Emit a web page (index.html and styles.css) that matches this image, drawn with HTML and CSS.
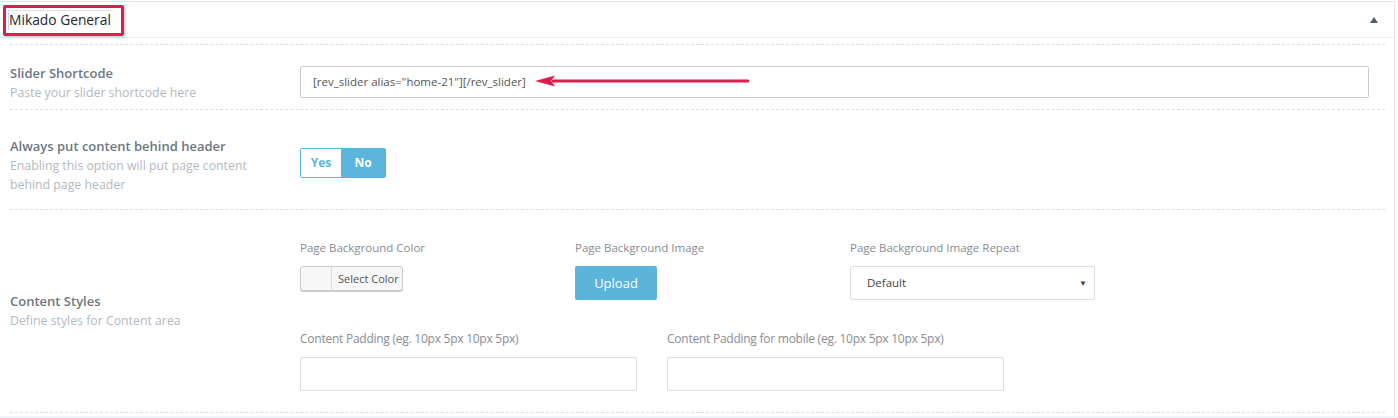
FILE: index.html
```html
<!DOCTYPE html>
<html lang="en">
<head>
    <meta charset="UTF-8">
    <meta name="viewport" content="width=device-width, initial-scale=1.0">
    <title>Mikado General</title>
    <link rel="stylesheet" href="styles.css">
</head>
<body>
    <!-- Meta box panel -->
    <div class="postbox">
        <div class="hndle">
            <div class="title-box"><span class="title">Mikado General</span></div>
            <span class="toggle-arrow"></span>
        </div>

        <div class="inside">
            <!-- Slider shortcode -->
            <div class="row row-slider">
                <div class="row-label">
                    <div class="label-title">Slider Shortcode</div>
                    <div class="label-desc">Paste your slider shortcode here</div>
                </div>
                <div class="row-field">
                    <div class="text-input wide">[rev_slider alias="home-21"][/rev_slider]</div>
                    <svg class="note-arrow" width="220" height="14" viewBox="0 0 220 14">
                        <path d="M18 7 H213" stroke="#dc1d4d" stroke-width="3" stroke-linecap="round"/>
                        <path d="M0 7 L20 1.5 L16 7 L20 12.5 Z" fill="#dc1d4d"/>
                    </svg>
                </div>
            </div>

            <!-- Content behind header -->
            <div class="row row-behind">
                <div class="row-label">
                    <div class="label-title">Always put content behind header</div>
                    <div class="label-desc">Enabling this option will put page content<br>behind page header</div>
                </div>
                <div class="row-field">
                    <div class="switch">
                        <span class="switch-yes">Yes</span>
                        <span class="switch-no">No</span>
                    </div>
                </div>
            </div>

            <!-- Content styles -->
            <div class="row row-styles">
                <div class="row-label">
                    <div class="label-title">Content Styles</div>
                    <div class="label-desc">Define styles for Content area</div>
                </div>
                <div class="row-field">
                    <div class="field-line">
                        <div class="field col-3">
                            <div class="field-label">Page Background Color</div>
                            <div class="color-btn">
                                <span class="swatch"></span>
                                <span class="color-text">Select Color</span>
                            </div>
                        </div>
                        <div class="field col-3">
                            <div class="field-label">Page Background Image</div>
                            <div class="upload-btn">Upload</div>
                        </div>
                        <div class="field">
                            <div class="field-label">Page Background Image Repeat</div>
                            <div class="select-box">
                                <span>Default</span>
                                <span class="select-arrow">&#9660;</span>
                            </div>
                        </div>
                    </div>
                    <div class="field-line second">
                        <div class="field col-pad">
                            <div class="field-label narrow">Content Padding (eg. 10px 5px 10px 5px)</div>
                            <div class="text-input pad"></div>
                        </div>
                        <div class="field">
                            <div class="field-label narrow">Content Padding for mobile (eg. 10px 5px 10px 5px)</div>
                            <div class="text-input pad"></div>
                        </div>
                    </div>
                </div>
            </div>
        </div>
    </div>
    <div class="bottom-band"></div>
</body>
</html>
```

FILE: styles.css
```css
/* Page base */
body {
    margin: 0;
    background: #fff;
    font-family: "Open Sans", "Noto Sans", Arial, sans-serif;
    color: #444;
}

/* Meta box */
.postbox {
    margin-top: 1px;
    margin-right: 3px;
    border-top: 1px solid #e5e5e5;
    border-right: 1px solid #e5e5e5;
    padding-bottom: 3px;
}

.hndle {
    height: 35px;
    border-bottom: 1px solid #eee;
    display: flex;
    align-items: flex-start;
    justify-content: space-between;
    padding: 0 16px 0 3px;
}

/* red highlight round the title */
.title-box {
    margin-top: 3px;
    height: 25px;
    width: 113px;
    border: 3px solid #dc1d4d;
    border-radius: 2px;
    box-shadow: 1px 1px 3px rgba(0, 0, 0, 0.25);
    padding: 0 0 0 2px;
}

.title {
    display: block;
    margin-top: 2px;
    height: 19px;
    border-left: 1px solid #d4d4d4;
    border-top: 1px solid #e2e2e2;
    width: 104px;
    font-size: 13.8px;
    line-height: 18px;
    color: #23282d;
    white-space: nowrap;
}

/* collapse arrow */
.toggle-arrow {
    margin-top: 15px;
    width: 0;
    height: 0;
    border-left: 4px solid transparent;
    border-right: 4px solid transparent;
    border-bottom: 6px solid #555d66;
}

.inside {
    padding: 0 9px 0 10px;
}

/* one option row */
.row {
    display: flex;
    border-top: 1px dashed #ddd;
    margin-top: 6px;
}
.row + .row {
    margin-top: 0;
}

.row-label {
    width: 290px;
    flex-shrink: 0;
}

.label-title {
    font-size: 13px;
    font-weight: 600;
    line-height: 20px;
    color: #6d7784;
}

.label-desc {
    font-size: 12.3px;
    line-height: 19.5px;
    color: #b3b9c2;
}

.row-field {
    flex: 1;
    padding-right: 16px;
    position: relative;
}

.row-slider {
    padding: 18px 0 6px;
}
.row-slider .row-field {
    padding-top: 3px;
}

.row-behind {
    padding: 26px 0 14px;
}

.row-styles {
    padding: 29px 0 21px;
    align-items: center;
    border-bottom: 1px dashed #ddd;
}
.row-styles .row-label {
    padding-bottom: 7px;
}

/* inputs */
.text-input {
    height: 32px;
    border: 1px solid #ccc;
    border-radius: 2px;
    box-sizing: border-box;
    font-size: 11.5px;
    line-height: 30px;
    color: #555;
    padding-left: 12px;
}

.text-input.pad {
    width: 337px;
    height: 34px;
    border-color: #ddd;
}

/* annotation arrow lying over the input */
.note-arrow {
    position: absolute;
    left: 235px;
    top: 11px;
}

/* yes/no switch */
.switch {
    display: flex;
    width: 86px;
    height: 30px;
    margin-top: 12px;
    border: 1px solid #5bb5dc;
    border-radius: 2px;
    box-sizing: border-box;
    font-size: 12px;
    font-weight: 700;
}
.switch span {
    display: flex;
    align-items: center;
    justify-content: center;
}
.switch-yes {
    width: 40px;
    color: #5bb5dc;
    background: #fff;
}
.switch-no {
    flex: 1;
    color: #fff;
    background: #5bb5dc;
}

/* field groups */
.field-line {
    display: flex;
}
.field-line.second {
    margin-top: 30px;
}

.col-3 {
    width: 275px;
}
.col-pad {
    width: 367px;
}

.field-label {
    font-size: 11.5px;
    line-height: 18px;
    color: #888d94;
    margin-bottom: 9px;
    white-space: nowrap;
}
.field-label.narrow {
    font-size: 12px;
    letter-spacing: -0.25px;
}

.color-btn {
    display: flex;
    width: 103px;
    height: 25px;
    border: 1px solid #ccc;
    border-radius: 3px;
    box-sizing: border-box;
    background: #f7f7f7;
    box-shadow: 0 1px 0 #ccc;
}
.swatch {
    width: 30px;
    border-right: 1px solid #ddd;
}
.color-text {
    font-size: 11px;
    line-height: 23px;
    color: #555;
    padding-left: 6px;
}

.upload-btn {
    width: 82px;
    height: 34px;
    background: #5bb5da;
    border-radius: 2px;
    color: #fff;
    font-size: 13px;
    line-height: 34px;
    text-align: center;
}

.select-box {
    width: 245px;
    height: 34px;
    border: 1px solid #ddd;
    border-radius: 2px;
    box-sizing: border-box;
    display: flex;
    align-items: center;
    justify-content: space-between;
    padding: 0 7px 0 16px;
    font-size: 11.5px;
    color: #444;
}
.select-arrow {
    font-size: 8px;
    color: #444;
}

.bottom-band {
    height: 6px;
    background: #f1f4f8;
}
```
